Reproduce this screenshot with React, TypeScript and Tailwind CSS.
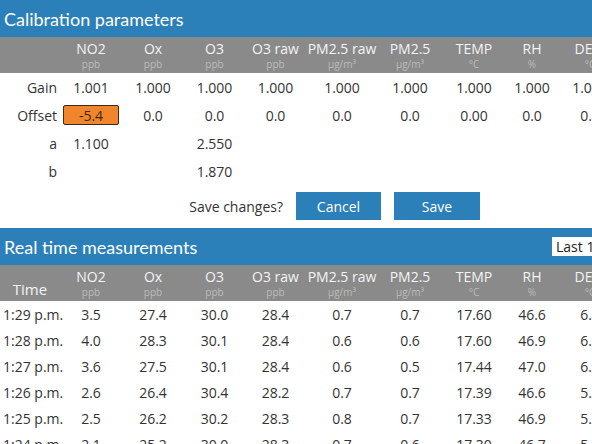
import React from "react";

const cols = [
  { name: "NO2", unit: "ppb", w: "w-[62px]" },
  { name: "Ox", unit: "ppb", w: "w-[62px]" },
  { name: "O3", unit: "ppb", w: "w-[61px]" },
  { name: "O3 raw", unit: "ppb", w: "w-[61px]" },
  { name: "PM2.5 raw", unit: "μg/m³", w: "w-[72px]" },
  { name: "PM2.5", unit: "μg/m³", w: "w-[64px]" },
  { name: "TEMP", unit: "°C", w: "w-[64px]" },
  { name: "RH", unit: "%", w: "w-[52px]" },
  { name: "DEW", unit: "°C", w: "w-[64px]" },
];

const calRows: { label: string; values: string[] }[] = [
  { label: "Gain", values: ["1.001", "1.000", "1.000", "1.000", "1.000", "1.000", "1.000", "1.000", "1.000"] },
  { label: "Offset", values: ["-5.4", "0.0", "0.0", "0.0", "0.0", "0.0", "0.00", "0.0", "0.0"] },
  { label: "a", values: ["1.100", "", "2.550", "", "", "", "", "", ""] },
  { label: "b", values: ["", "", "1.870", "", "", "", "", "", ""] },
];

const liveRows: string[][] = [
  ["1:29 p.m.", "3.5", "27.4", "30.0", "28.4", "0.7", "0.7", "17.60", "46.6", "6.1"],
  ["1:28 p.m.", "4.0", "28.3", "30.1", "28.4", "0.6", "0.6", "17.60", "46.9", "6.1"],
  ["1:27 p.m.", "3.6", "27.5", "30.1", "28.4", "0.6", "0.5", "17.44", "47.0", "6.0"],
  ["1:26 p.m.", "2.6", "26.4", "30.4", "28.2", "0.7", "0.7", "17.39", "46.6", "5.9"],
  ["1:25 p.m.", "2.5", "26.2", "30.2", "28.3", "0.8", "0.7", "17.33", "46.9", "5.9"],
  ["1:24 p.m.", "2.1", "25.2", "30.0", "28.3", "0.7", "0.6", "17.30", "46.7", "5.8"],
];

function HeaderRow({ first }: { first: string }) {
  return (
    <div className="flex h-[36px] bg-[#8a8a8a]">
      <div className="w-[60px] flex items-end justify-center pb-[3px] text-[15px] leading-[18px] text-[#f4f4f4]">
        {first}
      </div>
      {cols.map((c) => (
        <div key={c.name} className={`${c.w} flex flex-col items-center justify-center whitespace-nowrap`}>
          <span className="text-[14px] leading-[16px] text-[#f4f4f4]">{c.name}</span>
          <span className="mt-[1px] text-[10px] leading-[12px] text-[#bcbcbc]">{c.unit}</span>
        </div>
      ))}
    </div>
  );
}

function Bar({ title, children }: { title: string; children?: React.ReactNode }) {
  return (
    <div className="flex h-[37px] items-center bg-[#2b80b9] pl-[4px] text-white">
      <span className="font-['Lato',sans-serif] text-[18px] leading-[22px]">{title}</span>
      {children}
    </div>
  );
}

export default function App() {
  return (
    <div className="w-[592px] h-[444px] overflow-hidden bg-white text-[#333] font-['Open_Sans',sans-serif]">
      <div className="w-[720px]">
        <Bar title="Calibration parameters" />
        <HeaderRow first="" />
        {calRows.map((r) => (
          <div key={r.label} className="flex h-[28px] items-center text-[14px]">
            <div className="w-[60px] pr-[3px] text-right">{r.label}</div>
            {cols.map((c, i) => (
              <div key={c.name} className={`${c.w} flex justify-center`}>
                {r.label === "Offset" && i === 0 ? (
                  <div className="w-[56px] h-[20px] flex items-center justify-center rounded-[2px] border border-[#3a2a1e] bg-[#f0852c] text-[#3a2a1e]">
                    {r.values[i]}
                  </div>
                ) : (
                  r.values[i]
                )}
              </div>
            ))}
          </div>
        ))}
        <div className="mt-[7px] mb-[8px] flex h-[28px] items-center text-[14px]">
          <div className="w-[283px] text-right">Save changes?</div>
          <button className="ml-[13px] h-[28px] w-[85px] bg-[#2b80b9] text-white">Cancel</button>
          <button className="ml-[13px] h-[28px] w-[86px] bg-[#2b80b9] text-white">Save</button>
        </div>

        <Bar title="Real time measurements">
          <div className="ml-auto mr-[8px] h-[19px] w-[160px] bg-white pl-[4px] text-[14px] leading-[19px] text-[#222]">
            Last 10 minutes
          </div>
        </Bar>
        <HeaderRow first="Time" />
        {liveRows.map((r) => (
          <div key={r[0]} className="flex h-[26px] items-center text-[14px]">
            <div className="w-[60px] pl-[3px] whitespace-nowrap">{r[0]}</div>
            {cols.map((c, i) => (
              <div key={c.name} className={`${c.w} text-center`}>
                {r[i + 1]}
              </div>
            ))}
          </div>
        ))}
      </div>
    </div>
  );
}
